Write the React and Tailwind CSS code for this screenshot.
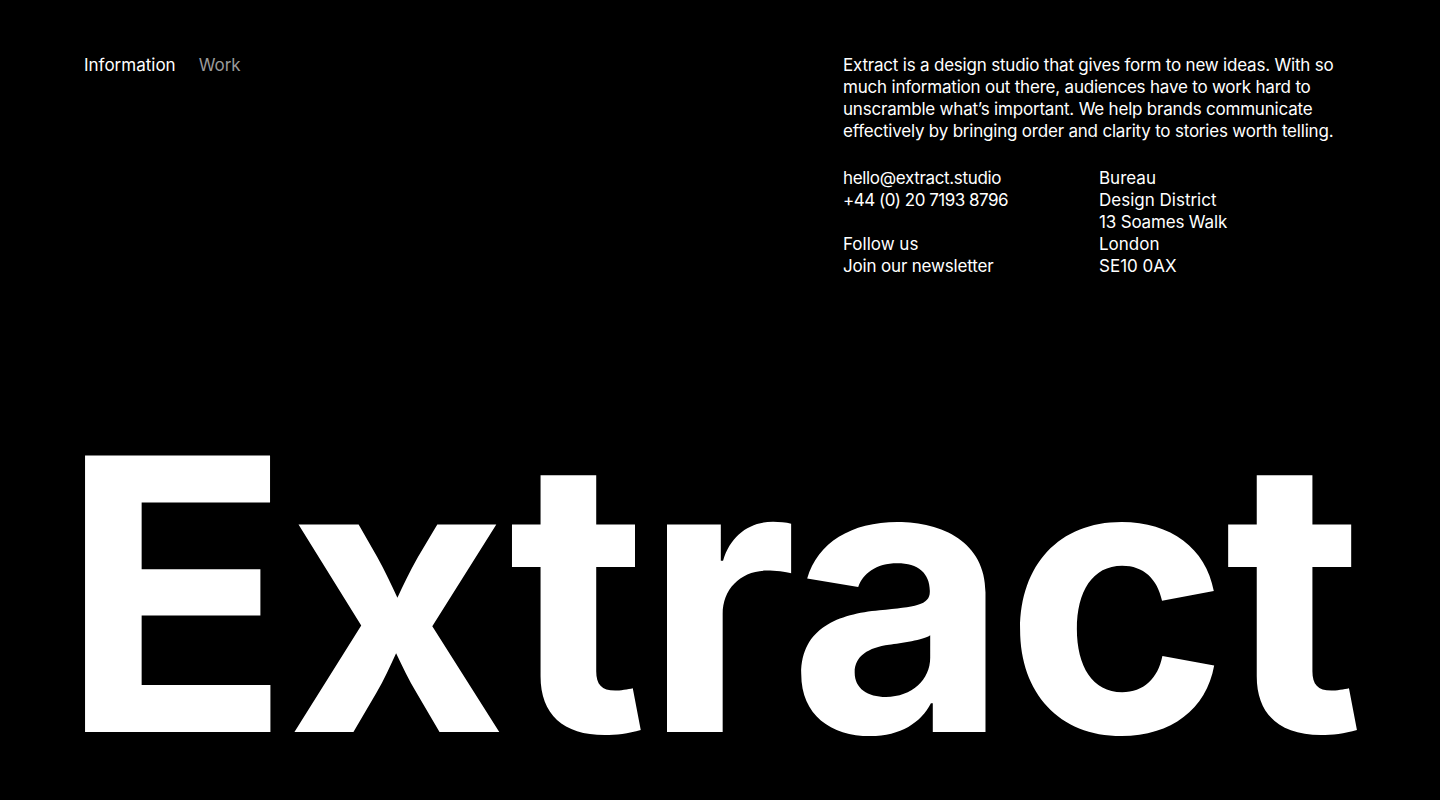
export default function App() {
  return (
    <div className="flex h-[800px] w-full flex-col justify-between overflow-hidden bg-black text-white [font-family:Inter,'Liberation_Sans',sans-serif]">
      <header className="grid grid-cols-[759px_1fr] px-[84px] pt-[54px] text-[17px] leading-[22px]">
        <nav className="flex gap-[23px]">
          <a href="#" className="text-white">Information</a>
          <a href="#" className="text-[#9a9a9a]">Work</a>
        </nav>
        <div className="w-[508px]">
          <p className="tracking-[-0.012em]">
            Extract is a design studio that gives form to new ideas. With so
            much information out there, audiences have to work hard to
            unscramble what’s important. We help brands communicate
            effectively by bringing order and clarity to stories worth telling.
          </p>
          <div className="mt-[25px] grid grid-cols-[256px_1fr]">
            <div className="flex flex-col">
              <a href="mailto:hello@extract.studio" className="tracking-[-0.02em]">hello@extract.studio</a>
              <span className="tracking-[-0.03em]">+44 (0) 20 7193 8796</span>
              <span className="mt-[22px]">Follow us</span>
              <span className="tracking-[-0.01em]">Join our newsletter</span>
            </div>
            <div className="flex flex-col">
              <span>Bureau</span>
              <span>Design District</span>
              <span className="tracking-[-0.01em]">13 Soames Walk</span>
              <span>London</span>
              <span>SE10 0AX</span>
            </div>
          </div>
        </div>
      </header>
      <h1 className="pb-[16px] pl-[60px] text-[380px] font-bold leading-none tracking-[-0.011em]">
        Extract
      </h1>
    </div>
  );
}
